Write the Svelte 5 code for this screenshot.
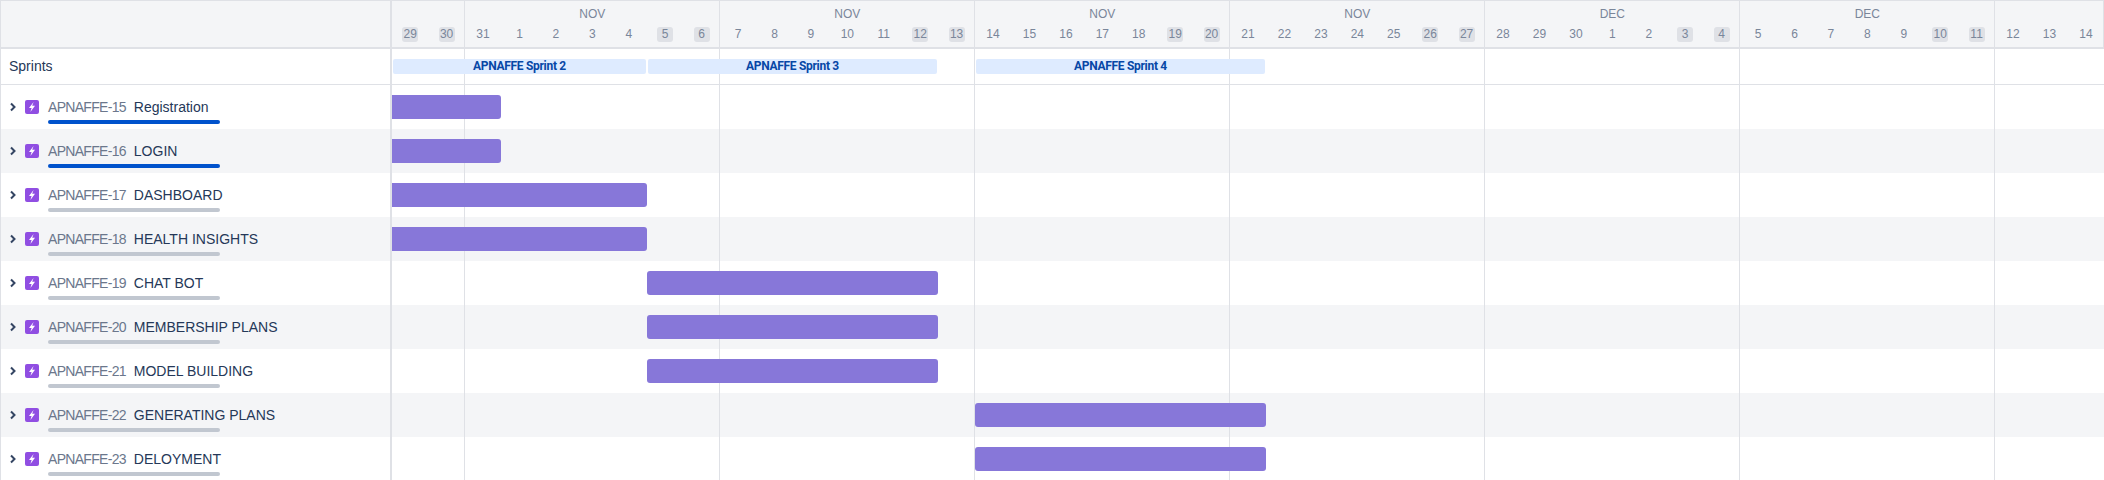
<script>
  const DAY = 255 / 7;
  const months = [
    { label: '', days: [29, 30], off: [29, 30] },
    { label: 'NOV', days: [31, 1, 2, 3, 4, 5, 6], off: [5, 6] },
    { label: 'NOV', days: [7, 8, 9, 10, 11, 12, 13], off: [12, 13] },
    { label: 'NOV', days: [14, 15, 16, 17, 18, 19, 20], off: [19, 20] },
    { label: 'NOV', days: [21, 22, 23, 24, 25, 26, 27], off: [26, 27] },
    { label: 'DEC', days: [28, 29, 30, 1, 2, 3, 4], off: [3, 4] },
    { label: 'DEC', days: [5, 6, 7, 8, 9, 10, 11], off: [10, 11] },
    { label: '', days: [12, 13, 14], off: [] }
  ];

  const sprints = [
    { name: 'APNAFFE Sprint 2', left: 1, width: 253 },
    { name: 'APNAFFE Sprint 3', left: 256, width: 289 },
    { name: 'APNAFFE Sprint 4', left: 584, width: 289 }
  ];

  const issues = [
    { key: 'APNAFFE-15', title: 'Registration', done: true, start: 0, end: 109 },
    { key: 'APNAFFE-16', title: 'LOGIN', done: true, start: 0, end: 109 },
    { key: 'APNAFFE-17', title: 'DASHBOARD', done: false, start: 0, end: 255 },
    { key: 'APNAFFE-18', title: 'HEALTH INSIGHTS', done: false, start: 0, end: 255 },
    { key: 'APNAFFE-19', title: 'CHAT BOT', done: false, start: 255, end: 546 },
    { key: 'APNAFFE-20', title: 'MEMBERSHIP PLANS', done: false, start: 255, end: 546 },
    { key: 'APNAFFE-21', title: 'MODEL BUILDING', done: false, start: 255, end: 546 },
    { key: 'APNAFFE-22', title: 'GENERATING PLANS', done: false, start: 583, end: 874 },
    { key: 'APNAFFE-23', title: 'DELOYMENT', done: false, start: 583, end: 874 }
  ];
</script>

<div class="gantt">
  <div class="row head">
    <div class="side"></div>
    <div class="months">
      {#each months as m}
        <div class="month" style="width: {m.days.length * DAY}px">
          <div class="month-name">{m.label}</div>
          <div class="days">
            {#each m.days as d}
              <div class="day"><span class:off={m.off.includes(d)}>{d}</span></div>
            {/each}
          </div>
        </div>
      {/each}
    </div>
  </div>

  <div class="row sprints">
    <div class="side sprint-label">Sprints</div>
    <div class="track">
      {#each sprints as s}
        <div class="sprint" style="left: {s.left}px; width: {s.width}px">{s.name}</div>
      {/each}
    </div>
  </div>

  {#each issues as issue, i}
    <div class="row issue" class:zebra={i % 2 === 1}>
      <div class="side issue-side">
        <svg class="chevron" viewBox="0 0 8 10" width="8" height="10">
          <path d="M2 1.5 5.5 5 2 8.5" fill="none" stroke="#344563" stroke-width="2" />
        </svg>
        <span class="epic">
          <svg viewBox="0 0 14 14" width="14" height="14">
            <path d="M8.6 2 4 8h2.6L5.4 12l4.6-6.2H7.2z" fill="#fff" />
          </svg>
        </span>
        <div class="info">
          <div class="names">
            <span class="key">{issue.key}</span>
            <span class="title">{issue.title}</span>
          </div>
          <div class="progress" class:done={issue.done}></div>
        </div>
      </div>
      <div class="track">
        <div
          class="bar"
          class:clipped={issue.start === 0}
          style="left: {issue.start}px; width: {issue.end - issue.start}px"
        ></div>
      </div>
    </div>
  {/each}
</div>

<style>
  :global(body) {
    margin: 0;
    background: #fff;
  }
  .gantt {
    width: 2104px;
    height: 480px;
    overflow: hidden;
    box-sizing: border-box;
    border-top: 1px solid #dfe1e6;
    font-family: "Liberation Sans", sans-serif;
    color: #253858;
  }
  .row {
    display: flex;
    box-sizing: border-box;
  }
  .side {
    flex: 0 0 392px;
    box-sizing: border-box;
    border-left: 1px solid #dfe1e6;
    border-right: 2px solid #dfe1e6;
  }
  .head {
    height: 48px;
    background: #f4f5f7;
    border-bottom: 2px solid #dfe1e6;
  }
  .months {
    display: flex;
    flex: 1;
    overflow: hidden;
  }
  .month {
    flex: none;
    box-sizing: border-box;
    box-shadow: inset -1px 0 0 #dfe1e6;
    color: #7a869a;
    font-size: 12px;
  }
  .month-name {
    height: 26px;
    padding-top: 6px;
    box-sizing: border-box;
    line-height: 15px;
    text-align: center;
  }
  .days {
    display: flex;
  }
  .day {
    flex: 1;
    display: flex;
    justify-content: center;
  }
  .day span {
    width: 16px;
    height: 15px;
    line-height: 15px;
    text-align: center;
    border-radius: 3px;
  }
  .day span.off {
    background: #dfe1e6;
  }
  .sprints {
    height: 36px;
    border-bottom: 1px solid #dfe1e6;
  }
  .sprint-label {
    padding-left: 8px;
    font-size: 14px;
    line-height: 35px;
  }
  .track {
    position: relative;
    flex: 1;
    background-image: linear-gradient(90deg, transparent 72px, #dfe1e6 72px, #dfe1e6 73px, transparent 73px);
    background-size: 255px 100%;
  }
  .sprint {
    position: absolute;
    top: 10px;
    height: 15px;
    line-height: 15px;
    border-radius: 2px;
    background: #deebff;
    color: #0747a6;
    font-family: Roboto, sans-serif;
    font-size: 12px;
    font-weight: 700;
    letter-spacing: -0.3px;
    text-align: center;
  }
  .issue {
    height: 44px;
  }
  .zebra {
    background: #f4f5f7;
  }
  .issue-side {
    display: flex;
    align-items: flex-start;
    padding-top: 15px;
    padding-left: 8px;
  }
  .chevron {
    margin-top: 2px;
    margin-right: 8px;
  }
  .epic {
    display: block;
    width: 14px;
    height: 14px;
    border-radius: 2px;
    background: #904ee2;
    margin-right: 9px;
  }
  .epic svg {
    display: block;
  }
  .info {
    width: 172px;
  }
  .names {
    display: flex;
    align-items: baseline;
    gap: 8px;
    height: 20px;
    line-height: 15px;
    white-space: nowrap;
    font-size: 14px;
  }
  .key {
    color: #6b778c;
    letter-spacing: -0.7px;
  }
  .progress {
    height: 4px;
    border-radius: 2px;
    background: #c1c7d0;
  }
  .progress.done {
    background: #0052cc;
  }
  .bar {
    position: absolute;
    top: 10px;
    height: 24px;
    box-sizing: border-box;
    background: #8777d9;
    border-radius: 3px;
  }
  .bar.clipped {
    border-radius: 0 3px 3px 0;
  }
</style>
